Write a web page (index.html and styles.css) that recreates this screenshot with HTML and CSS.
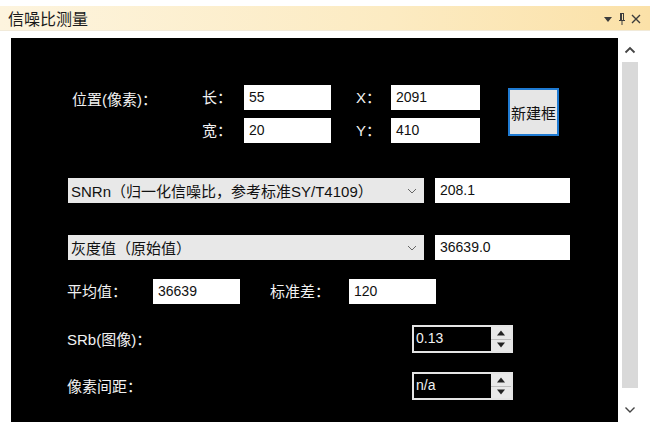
FILE: index.html
```html
<!DOCTYPE html>
<html lang="zh-CN">
<head>
    <meta charset="UTF-8">
    <title>信噪比测量</title>
    <link rel="stylesheet" href="styles.css">
</head>
<body>
    <div class="window">
        <div class="titlebar">
            <span class="title">信噪比测量</span>
            <div class="tools">
                <svg class="tool" width="14" height="14" viewBox="0 0 14 14"><polygon points="3,5 11,5 7,10" fill="#3c3c3c"/></svg>
                <svg class="tool" width="14" height="14" viewBox="0 0 14 14"><path d="M5 1.5h4M5.5 1.5v7M8.5 1.5v7M6.5 1.5v7M4 8.5h6M7 8.5v4.5" stroke="#3c3c3c" stroke-width="1" fill="none"/></svg>
                <svg class="tool" width="14" height="14" viewBox="0 0 14 14"><path d="M3 3l8 8M11 3l-8 8" stroke="#3c3c3c" stroke-width="1.4"/></svg>
            </div>
        </div>

        <div class="content">
            <div class="panel">
                <div class="row pos-row">
                    <div class="label pos-label">位置(像素)：</div>
                    <div class="pos-grid">
                        <div class="label">长：</div>
                        <div class="field">55</div>
                        <div class="label">X：</div>
                        <div class="field">2091</div>
                        <div class="label">宽：</div>
                        <div class="field">20</div>
                        <div class="label">Y：</div>
                        <div class="field">410</div>
                    </div>
                    <div class="btn">新建框</div>
                </div>

                <div class="row combo-row first-combo">
                    <div class="combo">
                        <span>SNRn（归一化信噪比，参考标准SY/T4109）</span>
                        <svg width="12" height="8" viewBox="0 0 12 8"><polyline points="2,2 6,6 10,2" fill="none" stroke="#666" stroke-width="1"/></svg>
                    </div>
                    <div class="field result">208.1</div>
                </div>

                <div class="row combo-row second-combo">
                    <div class="combo">
                        <span>灰度值（原始值）</span>
                        <svg width="12" height="8" viewBox="0 0 12 8"><polyline points="2,2 6,6 10,2" fill="none" stroke="#666" stroke-width="1"/></svg>
                    </div>
                    <div class="field result">36639.0</div>
                </div>

                <div class="row stats-row">
                    <div class="label mean-label">平均值：</div>
                    <div class="field small">36639</div>
                    <div class="label std-label">标准差：</div>
                    <div class="field small">120</div>
                </div>

                <div class="row spin-row srb-row">
                    <div class="label">SRb(图像)：</div>
                    <div class="spin">
                        <div class="spin-value">0.13</div>
                        <div class="spin-buttons">
                            <div class="spin-btn"><svg width="10" height="6" viewBox="0 0 10 6"><polygon points="1,5.5 9,5.5 5,0.5" fill="#222"/></svg></div>
                            <div class="spin-btn"><svg width="10" height="6" viewBox="0 0 10 6"><polygon points="1,0.5 9,0.5 5,5.5" fill="#222"/></svg></div>
                        </div>
                    </div>
                </div>

                <div class="row spin-row pitch-row">
                    <div class="label">像素间距：</div>
                    <div class="spin">
                        <div class="spin-value">n/a</div>
                        <div class="spin-buttons">
                            <div class="spin-btn"><svg width="10" height="6" viewBox="0 0 10 6"><polygon points="1,5.5 9,5.5 5,0.5" fill="#222"/></svg></div>
                            <div class="spin-btn"><svg width="10" height="6" viewBox="0 0 10 6"><polygon points="1,0.5 9,0.5 5,5.5" fill="#222"/></svg></div>
                        </div>
                    </div>
                </div>
            </div>

            <div class="scrollbar">
                <div class="arrow up">
                    <svg width="12" height="8" viewBox="0 0 12 8"><polyline points="1.5,6.5 6,2 10.5,6.5" fill="none" stroke="#444" stroke-width="1.8"/></svg>
                </div>
                <div class="track"></div>
                <div class="arrow down">
                    <svg width="12" height="8" viewBox="0 0 12 8"><polyline points="1.5,1.5 6,6 10.5,1.5" fill="none" stroke="#444" stroke-width="1.4"/></svg>
                </div>
            </div>
        </div>
    </div>
</body>
</html>
```

FILE: styles.css
```css
/* General Styles */
body {
    margin: 0;
    padding: 0;
    background: #ffffff;
    font-family: "Liberation Sans", "Noto Sans CJK SC", sans-serif;
}

.window {
    width: 650px;
    height: 434px;
    overflow: hidden;
}

/* Title bar */
.titlebar {
    display: flex;
    align-items: center;
    justify-content: space-between;
    margin-top: 6px;
    height: 24px;
    padding: 0 7px 0 8px;
    background: linear-gradient(90deg, #fdf4de, #fcebc2 60%, #fbe1a8);
    border-bottom: 1px solid #f1ead9;
}

.title {
    font-size: 16px;
    color: #1a1a1a;
    font-family: "Noto Sans CJK SC", sans-serif;
}

.tools {
    display: flex;
    padding-top: 2px;
}

.tool {
    display: block;
}

/* Main area */
.content {
    display: flex;
    margin-top: 7px;
    padding-left: 11px;
}

.panel {
    box-sizing: border-box;
    width: 607px;
    height: 384px;
    background: #000;
    padding-left: 57px;
    display: flex;
    flex-direction: column;
}

.row {
    display: flex;
    align-items: center;
}

.label {
    color: #f2f2f2;
    font-size: 15px;
    line-height: 25px;
    white-space: nowrap;
}

.field {
    box-sizing: border-box;
    height: 25px;
    background: #fff;
    color: #111;
    font-size: 14px;
    line-height: 25px;
    padding-left: 5px;
}

/* Position block */
.pos-row {
    align-items: flex-start;
    margin-top: 47px;
}

.pos-label {
    width: 130px;
    margin-left: 4px;
    padding-top: 2px;
}

.pos-grid {
    display: grid;
    grid-template-columns: 42px 87px 60px 89px;
    grid-template-rows: 25px 25px;
    row-gap: 8px;
}

.pos-grid .label:nth-child(3),
.pos-grid .label:nth-child(7) {
    margin-left: 25px;
}

.btn {
    box-sizing: border-box;
    width: 51px;
    height: 48px;
    margin: 3px 0 0 28px;
    background: #e6e6e6;
    border: 2px solid #1f7bd3;
    color: #111;
    font-size: 15px;
    font-family: "Noto Sans CJK SC", sans-serif;
    display: flex;
    align-items: center;
    justify-content: center;
}

/* Dropdowns */
.combo-row {
    gap: 11px;
}

.first-combo {
    margin-top: 35px;
}

.second-combo {
    margin-top: 32px;
}

.combo {
    box-sizing: border-box;
    width: 356px;
    height: 25px;
    background: #e8e8e8;
    color: #111;
    font-size: 15px;
    display: flex;
    align-items: center;
    justify-content: space-between;
    padding: 0 6px 0 3px;
}

.combo svg {
    display: block;
}

.result {
    width: 135px;
}

/* Statistics */
.stats-row {
    margin-top: 19px;
}

.mean-label {
    width: 86px;
    margin-left: -1px;
}

.std-label {
    width: 79px;
    margin-left: 30px;
}

.small {
    width: 87px;
}

/* Spin boxes */
.spin-row {
    justify-content: space-between;
    width: 445px;
}

.spin-row .label {
    margin-left: -1px;
}

.srb-row {
    margin-top: 21px;
}

.pitch-row {
    margin-top: 19px;
}

.spin {
    box-sizing: border-box;
    width: 101px;
    height: 28px;
    border: 2px solid #e4e4e4;
    display: flex;
}

.spin-value {
    flex: 1;
    color: #f2f2f2;
    font-size: 14px;
    line-height: 22px;
    padding-left: 2px;
}

.spin-buttons {
    width: 20px;
    display: flex;
    flex-direction: column;
    background: #e8e8e8;
}

.spin-btn {
    flex: 1;
    display: flex;
    align-items: center;
    justify-content: center;
}

.spin-btn:first-child {
    border-bottom: 1px solid #bdbdbd;
}

.spin-btn svg {
    display: block;
}

/* Scrollbar */
.scrollbar {
    width: 24px;
    height: 384px;
    display: flex;
    flex-direction: column;
    align-items: center;
}

.arrow {
    height: 24px;
    display: flex;
    align-items: center;
    justify-content: center;
}

.arrow.down {
    flex: 1;
    padding-top: 10px;
}

.track {
    width: 16px;
    height: 326px;
    background: #d9d9d9;
}
```
